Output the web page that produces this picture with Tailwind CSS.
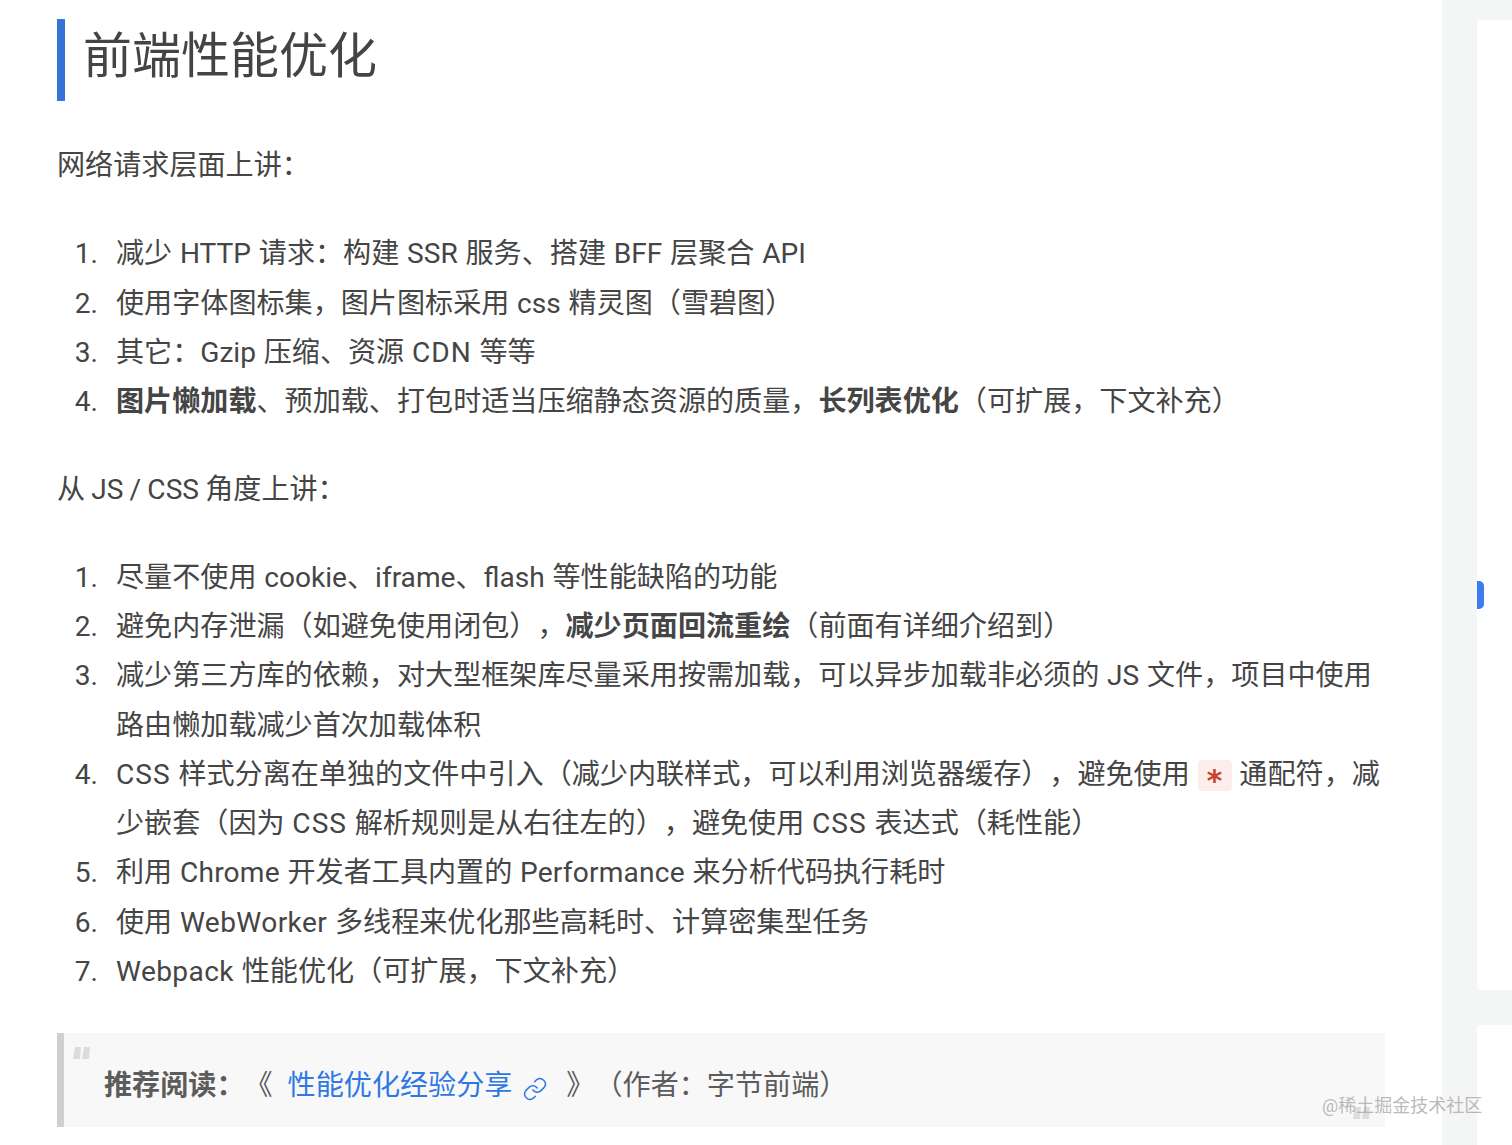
<!DOCTYPE html>
<html lang="zh-CN">
  <head>
    <meta charset="UTF-8" />
    <meta name="viewport" content="width=device-width, initial-scale=1.0" />
    <title>前端性能优化</title>
    <script src="https://cdn.jsdelivr.net/npm/@tailwindcss/browser@4"></script>
  </head>
  <body class="bg-white font-['Roboto','Noto_Sans_CJK_SC',sans-serif] text-[#454545] [text-spacing-trim:space-all]">
    <div class="relative flex h-[1145px] overflow-hidden">
      <!-- Article -->
      <main class="w-[1442px] shrink-0 pt-[19px] pl-[57px] pr-[57px] text-[28.1px] leading-[49.28px] [word-spacing:0.8px]">
        <h2 class="flex h-[82px] items-center border-l-[8px] border-[#3574d6] pl-[18px] pb-[8px] text-[49px] font-normal leading-none text-[#444]">前端性能优化</h2>

        <p class="mt-[40px]">网络请求层面上讲：</p>

        <ol class="mt-[39px]">
          <li class="flex"><span class="w-[41px] shrink-0 text-right">1.</span><span class="ml-[18px]">减少 HTTP 请求：构建 SSR 服务、搭建 BFF 层聚合 API</span></li>
          <li class="flex"><span class="w-[41px] shrink-0 text-right">2.</span><span class="ml-[18px]">使用字体图标集，图片图标采用 css 精灵图（雪碧图）</span></li>
          <li class="flex"><span class="w-[41px] shrink-0 text-right">3.</span><span class="ml-[18px]">其它：Gzip 压缩、资源 <span class="tracking-[1px]">CDN</span> 等等</span></li>
          <li class="flex"><span class="w-[41px] shrink-0 text-right">4.</span><span class="ml-[18px]"><strong class="font-bold">图片懒加载</strong>、预加载、打包时适当压缩静态资源的质量，<strong class="font-bold">长列表优化</strong>（可扩展，下文补充）</span></li>
        </ol>

        <p class="mt-[39px] [word-spacing:-0.8px]">从 JS / CSS 角度上讲：</p>

        <ol class="mt-[38px]">
          <li class="flex"><span class="w-[41px] shrink-0 text-right">1.</span><span class="ml-[18px]">尽量不使用 cookie、iframe、flash 等性能缺陷的功能</span></li>
          <li class="flex"><span class="w-[41px] shrink-0 text-right">2.</span><span class="ml-[18px]">避免内存泄漏（如避免使用闭包），<strong class="font-bold">减少页面回流重绘</strong>（前面有详细介绍到）</span></li>
          <li class="flex"><span class="w-[41px] shrink-0 text-right">3.</span><span class="ml-[18px]">减少第三方库的依赖，对大型框架库尽量采用按需加载，可以异步加载非必须的 JS 文件，项目中使用路由懒加载减少首次加载体积</span></li>
          <li class="flex"><span class="w-[41px] shrink-0 text-right">4.</span><span class="ml-[18px]"><span class="tracking-[1px]">CSS</span> 样式分离在单独的文件中引入（减少内联样式，可以利用浏览器缓存），避免使用 <code class="inline-block h-[31px] w-[34px] rounded-[4px] bg-[#fbeeec] text-center align-[-2px] text-[30px] leading-[31px] font-bold font-['DejaVu_Sans_Mono',monospace] text-[#c8442c]"><span class="relative top-[5px]">*</span></code> 通配符，减少嵌套（因为 <span class="tracking-[1px]">CSS</span> 解析规则是从右往左的），避免使用 <span class="tracking-[1px]">CSS</span> 表达式（耗性能）</span></li>
          <li class="flex"><span class="w-[41px] shrink-0 text-right">5.</span><span class="ml-[18px]">利用 <span class="tracking-[0.2px]">Chrome</span> 开发者工具内置的 <span class="tracking-[0.2px]">Performance</span> 来分析代码执行耗时</span></li>
          <li class="flex"><span class="w-[41px] shrink-0 text-right">6.</span><span class="ml-[18px]">使用 <span class="tracking-[0.4px]">WebWorker</span> 多线程来优化那些高耗时、计算密集型任务</span></li>
          <li class="flex"><span class="w-[41px] shrink-0 text-right">7.</span><span class="ml-[18px]"><span class="tracking-[0.4px]">Webpack</span> 性能优化（可扩展，下文补充）</span></li>
        </ol>

        <!-- Recommended reading -->
        <blockquote class="relative mt-[37px] h-[94px] border-l-[7px] border-[#cfcfcf] bg-[#f8f8f8] pl-[40px] pt-[28px] text-[#5c5c5c]">
          <svg class="absolute left-[9px] top-[14px]" width="17" height="12" viewBox="0 0 17 12"><path d="M2 0h6L7 12H0zM11 0h6l-1 12H9z" fill="#dcdcdc" /></svg>
          <p class="flex items-center"><strong class="font-bold">推荐阅读：</strong><span>《</span><a href="#" class="ml-[15px] text-[#2f78e4]">性能优化经验分享</a><svg class="ml-[10px] mt-[6px]" width="26" height="26" viewBox="0 0 24 24" fill="none" stroke="#2f78e4" stroke-width="1.4" stroke-linecap="round" stroke-linejoin="round"><path d="M10 13a5 5 0 0 0 7.5.5l3-3a5 5 0 0 0-7-7l-1.7 1.7" /><path d="M14 11a5 5 0 0 0-7.5-.5l-3 3a5 5 0 0 0 7 7l1.7-1.7" /></svg><span class="ml-[18px]">》</span><span>（作者：字节前端）</span></p>
          <svg class="absolute right-[15px] bottom-[8px]" width="17" height="12" viewBox="0 0 17 12"><path d="M2 0h6L7 12H0zM11 0h6l-1 12H9z" fill="#dcdcdc" /></svg>
        </blockquote>
      </main>

      <!-- Right rail -->
      <aside class="flex-1 bg-[#f4f5f5] pl-[35px] pt-[20px]">
        <div class="h-[970px] rounded-l-[4px] bg-white"></div>
        <div class="mt-[35px] h-[200px] rounded-l-[4px] bg-white"></div>
      </aside>

      <!-- Scroll marker and watermark sit over the page -->
      <div class="absolute left-[1477px] top-[581px] h-[28px] w-[7px] rounded-r-[5px] bg-[#3f7bf0]"></div>
      <span class="absolute left-[1322px] top-[1094px] text-[18px] leading-[24px] text-[#a8a8a8]/80">@稀土掘金技术社区</span>
    </div>
  </body>
</html>
